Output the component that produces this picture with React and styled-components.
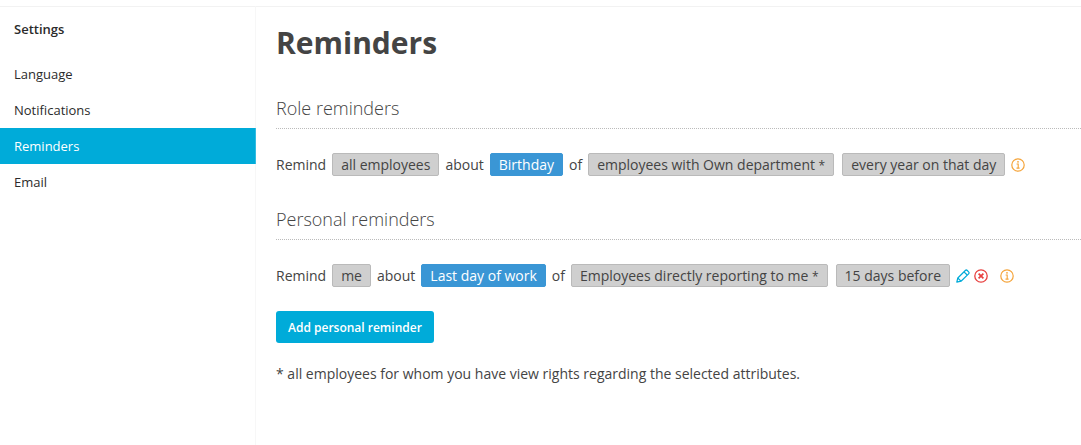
import styled, { createGlobalStyle } from 'styled-components'

const GlobalStyle = createGlobalStyle`
  * {
    box-sizing: border-box;
  }
  body {
    margin: 0;
    background: #fff;
    color: #444;
    font-family: "Open Sans", "Noto Sans", sans-serif;
    font-size: 14px;
    line-height: 21px;
  }
`

const Page = styled.div`
  display: flex;
  min-height: 100vh;
  padding-top: 6px;
`

const Sidebar = styled.nav`
  flex: 0 0 256px;
  border-top: 1px solid #f2f2f2;
  border-right: 1px solid #f7f7f7;
  font-size: 13px;
  color: #2b2b2b;
`

const SidebarTitle = styled.h2`
  margin: 0;
  padding: 4px 14px 9px;
  font-size: 13px;
  font-weight: 600;
  line-height: 36px;
`

const Menu = styled.ul`
  margin: 0;
  padding: 0;
  list-style: none;
`

const MenuLink = styled.a`
  display: block;
  margin-right: -1px;
  padding: 0 14px;
  border-right: 1px solid ${p => (p.$active ? '#33bce1' : 'transparent')};
  line-height: 36px;
  text-decoration: none;
  color: ${p => (p.$active ? '#fff' : 'inherit')};
  background: ${p => (p.$active ? '#00abd9' : 'transparent')};
`

const Content = styled.main`
  flex: 1;
  min-width: 0;
  padding: 14px 0 20px 20px;
  border-top: 1px solid #f2f2f2;
`

const Title = styled.h1`
  margin: 0 0 31px;
  font-size: 30px;
  font-weight: 700;
  line-height: 44px;
`

const Section = styled.section`
  margin-bottom: ${p => (p.$last ? '24px' : '31px')};
`

const SectionTitle = styled.h2`
  margin: 0 0 24px;
  padding-bottom: 8px;
  border-bottom: 1px dotted #bbb;
  font-size: 18px;
  font-weight: 300;
  line-height: 24px;
`

const Reminder = styled.div`
  display: flex;
  align-items: center;
  gap: 6px;
  white-space: nowrap;
`

const Tag = styled.span`
  padding: 0 8px;
  border: 1px solid ${p => (p.$primary ? '#3a96d5' : '#bababa')};
  border-radius: 2px;
  background: ${p => (p.$primary ? '#3a96d5' : '#cfcfcf')};
  color: ${p => (p.$primary ? '#fff' : 'inherit')};
`

const TagPair = styled.span`
  display: flex;
  gap: 8px;
`

const Star = styled.small`
  font-size: 12px;
  line-height: 1;
`

const Actions = styled.span`
  display: flex;
  align-items: center;
  gap: 4px;
`

const IconButton = styled.button`
  display: flex;
  padding: 0;
  border: 0;
  background: none;
  color: ${p => p.$color};
  cursor: pointer;
`

const InfoSlot = styled.span`
  display: flex;
  margin-left: ${p => (p.$spaced ? '6px' : '0')};
`

const AddButton = styled.button`
  display: block;
  height: 32px;
  margin-bottom: 20px;
  padding: 0 12px;
  border: 0;
  border-radius: 3px;
  background: #00abd9;
  color: #fff;
  font-family: inherit;
  font-size: 12px;
  font-weight: 600;
  cursor: pointer;
`

const Note = styled.p`
  margin: 0;
`

const menu = ['Language', 'Notifications', 'Reminders', 'Email']

function InfoIcon() {
  return (
    <svg width="14" height="14" viewBox="0 0 14 14" fill="none" stroke="currentColor">
      <circle cx="7" cy="7" r="6.2" strokeWidth="1.2" />
      <path d="M5.6 6h1.6v4M5.5 10.1h3.1" strokeWidth="1.1" />
      <circle cx="7" cy="3.8" r=".9" fill="currentColor" stroke="none" />
    </svg>
  )
}

function PencilIcon() {
  return (
    <svg width="14" height="14" viewBox="0 0 14 14" fill="none" stroke="currentColor" strokeWidth="1.2" strokeLinejoin="round">
      <path d="M.8 13.2l1-4.2 7.5-7.5q1-1 2 0l1.3 1.3q1 1 0 2L5 12.2z" />
      <path d="M8 2.8L11.2 6M1.8 9L5 12.2" />
    </svg>
  )
}

function RemoveIcon() {
  return (
    <svg width="14" height="14" viewBox="0 0 14 14" fill="none" stroke="currentColor">
      <circle cx="7" cy="7" r="6.2" strokeWidth="1.3" />
      <path d="M4.6 4.6l4.8 4.8M9.4 4.6L4.6 9.4" strokeWidth="1.7" />
    </svg>
  )
}

function Info({ spaced }) {
  return (
    <InfoSlot $spaced={spaced}>
      <IconButton type="button" $color="#f5a43a" aria-label="Info">
        <InfoIcon />
      </IconButton>
    </InfoSlot>
  )
}

function ReminderRow({ who, about, of, when, editable }) {
  return (
    <Reminder>
      <span>Remind</span>
      <Tag>{who}</Tag>
      <span>about</span>
      <Tag $primary>{about}</Tag>
      <span>of</span>
      <TagPair>
        <Tag>{of} <Star>*</Star></Tag>
        <Tag>{when}</Tag>
      </TagPair>
      {editable && (
        <Actions>
          <IconButton type="button" $color="#00abd9" aria-label="Edit reminder">
            <PencilIcon />
          </IconButton>
          <IconButton type="button" $color="#e8403f" aria-label="Delete reminder">
            <RemoveIcon />
          </IconButton>
        </Actions>
      )}
      <Info spaced={editable} />
    </Reminder>
  )
}

export default function App() {
  return (
    <>
      <GlobalStyle />
      <Page>
        <Sidebar>
          <SidebarTitle>Settings</SidebarTitle>
          <Menu>
            {menu.map(item => (
              <li key={item}>
                <MenuLink href="#" $active={item === 'Reminders'}>{item}</MenuLink>
              </li>
            ))}
          </Menu>
        </Sidebar>
        <Content>
          <Title>Reminders</Title>
          <Section>
            <SectionTitle>Role reminders</SectionTitle>
            <ReminderRow
              who="all employees"
              about="Birthday"
              of="employees with Own department"
              when="every year on that day"
            />
          </Section>
          <Section $last>
            <SectionTitle>Personal reminders</SectionTitle>
            <ReminderRow
              who="me"
              about="Last day of work"
              of="Employees directly reporting to me"
              when="15 days before"
              editable
            />
          </Section>
          <AddButton type="button">Add personal reminder</AddButton>
          <Note>* all employees for whom you have view rights regarding the selected attributes.</Note>
        </Content>
      </Page>
    </>
  )
}
